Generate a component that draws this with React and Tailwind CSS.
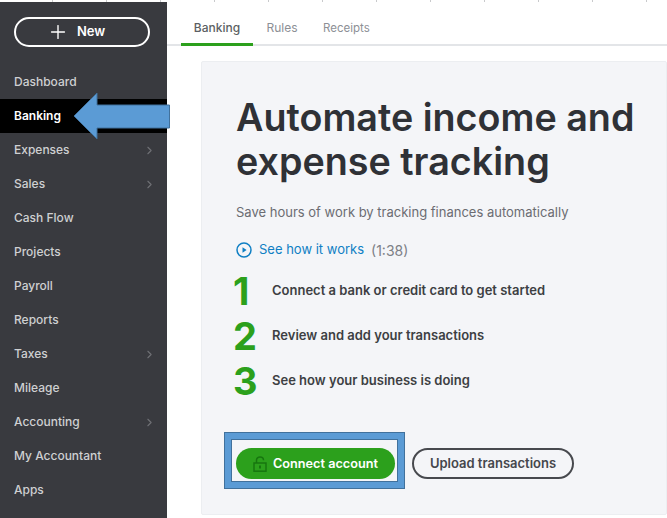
import { Plus, ChevronRight } from 'lucide-react';

const FONT = { fontFamily: 'Inter' };

const NAV_ITEMS = [
  { label: 'Dashboard' },
  { label: 'Banking', active: true },
  { label: 'Expenses', more: true },
  { label: 'Sales', more: true },
  { label: 'Cash Flow' },
  { label: 'Projects' },
  { label: 'Payroll' },
  { label: 'Reports' },
  { label: 'Taxes', more: true },
  { label: 'Mileage' },
  { label: 'Accounting', more: true },
  { label: 'My Accountant' },
  { label: 'Apps' },
];

const STEPS = [
  { n: '1', text: 'Connect a bank or credit card to get started' },
  { n: '2', text: 'Review and add your transactions' },
  { n: '3', text: 'See how your business is doing' },
];

const Sidebar = () => (
  <aside className="w-[167px] h-[516px] shrink-0 bg-[#393a3f] overflow-hidden relative">
    <div className="px-[14px] pt-[15px] pb-[18px]">
      <button className="w-[136px] h-[30px] pl-[31px] rounded-full border-2 border-white text-white flex items-center gap-[8px] text-[13px] font-semibold">
        <Plus size={22} strokeWidth={1.5} />
        New
      </button>
    </div>
    <nav>
      {NAV_ITEMS.map((item) => (
        <div
          key={item.label}
          className={`h-[34px] pl-[14px] pr-[11px] flex items-center justify-between text-[12px] ${item.active ? 'bg-black text-white font-semibold' : 'text-[#cfd0d2] font-medium'}`}
        >
          {item.label}
          {item.more && <ChevronRight size={13} strokeWidth={2} className="text-[#6f7075]" />}
        </div>
      ))}
    </nav>
  </aside>
);

const Tabs = () => (
  <div className="h-[44px] border-b-2 border-[#e3e5e8] pl-[14px] flex items-end text-[12px]">
    <div className="w-[72px] h-[30px] pt-[3px] -mb-[2px] border-b-[3px] border-[#2ca01c] text-center font-medium text-[#5c5f63]">Banking</div>
    <div className="w-[58px] h-[30px] pt-[5px] text-center text-[#8d9096]">Rules</div>
    <div className="ml-[12px] h-[30px] pt-[5px] text-[11.5px] leading-[18px] text-[#8d9096]">Receipts</div>
  </div>
);

const PlayIcon = () => (
  <svg width="16" height="16" viewBox="0 0 16 16" fill="none">
    <circle cx="8" cy="8" r="7" stroke="#0f7fc4" strokeWidth="1.5" />
    <path d="M6.5 5.2 L10.6 8 L6.5 10.8 Z" fill="#0f7fc4" />
  </svg>
);

const LockIcon = () => (
  <svg width="14" height="16" viewBox="0 0 14 16" fill="none">
    <path d="M3.5 7 V4.2 C3.5 2.2 5 1 7 1 C9 1 10.5 2.2 10.5 4.2" stroke="#17760f" strokeWidth="1.5" />
    <rect x="1" y="7" width="12" height="8.2" stroke="#17760f" strokeWidth="1.5" />
    <rect x="6" y="9.5" width="2" height="3" fill="#17760f" />
  </svg>
);

const Card = () => (
  <section className="ml-[34px] mt-[15px] h-[454px] bg-[#f4f5f8] border border-[#eceef1] rounded-[2px] pl-[34px] pt-[33px]">
    <h1 className="text-[37.7px] leading-[44px] font-semibold text-[#2f3136] whitespace-nowrap">
      Automate income and<br />expense tracking
    </h1>
    <p className="mt-[20px] text-[13px] leading-[18px] text-[#6b6c72]">Save hours of work by tracking finances automatically</p>
    <div className="mt-[20px] flex items-center h-[18px] text-[13px]">
      <PlayIcon />
      <span className="ml-[7px] text-[#0f7fc4]">See how it works</span>
      <span className="ml-[7px] text-[14px] text-[#7d8086]">(1:38)</span>
    </div>
    <div className="mt-[9px] flex flex-col">
      {STEPS.map((step) => (
        <div key={step.n} className="h-[45px] flex items-center">
          <span className="w-[39px] -ml-[3px] text-[38px] leading-none font-bold text-[#2ca01c]">{step.n}</span>
          <span className="text-[13px] font-semibold text-[#3d3f43]">{step.text}</span>
        </div>
      ))}
    </div>
    <div className="mt-[29px] -ml-[12px] flex items-end">
      <div className="w-[181px] h-[57px] border border-[#41719c] bg-[#5b9bd5] p-[6px]">
        <div className="h-[43px] border border-[#41719c] bg-[#f4f5f8] pt-[8px] pl-[4px]">
          <button className="w-[159px] h-[31px] rounded-full bg-[#2ca01c] flex items-center justify-center gap-[6px] text-white text-[12.7px] font-semibold">
            <LockIcon />
            Connect account
          </button>
        </div>
      </div>
      <button className="ml-[7px] mb-[10px] w-[162px] h-[31px] rounded-full border-2 border-[#47494e] text-[13px] font-semibold text-[#45474c]">
        Upload transactions
      </button>
    </div>
  </section>
);

const BlueArrow = () => (
  <svg className="absolute left-[73px] top-[92px]" width="98" height="48" viewBox="0 0 98 48">
    <path d="M1 24 L24 1 L24 13 L96.5 13 L96.5 36 L24 36 L24 47 Z" fill="#5b9bd5" stroke="#41719c" strokeWidth="1" />
  </svg>
);

export default function App() {
  return (
    <div className="relative w-[667px] h-[518px] bg-white overflow-hidden" style={FONT}>
      <div className="h-[2px] flex -ml-[1px]">
        {Array.from({ length: 13 }).map((_, i) => (
          <div key={i} className="w-[54px] shrink-0 h-[2px] border-r border-[#c9cacc]" />
        ))}
      </div>
      <div className="flex">
        <Sidebar />
        <main className="flex-1">
          <Tabs />
          <Card />
        </main>
      </div>
      <BlueArrow />
    </div>
  );
}
